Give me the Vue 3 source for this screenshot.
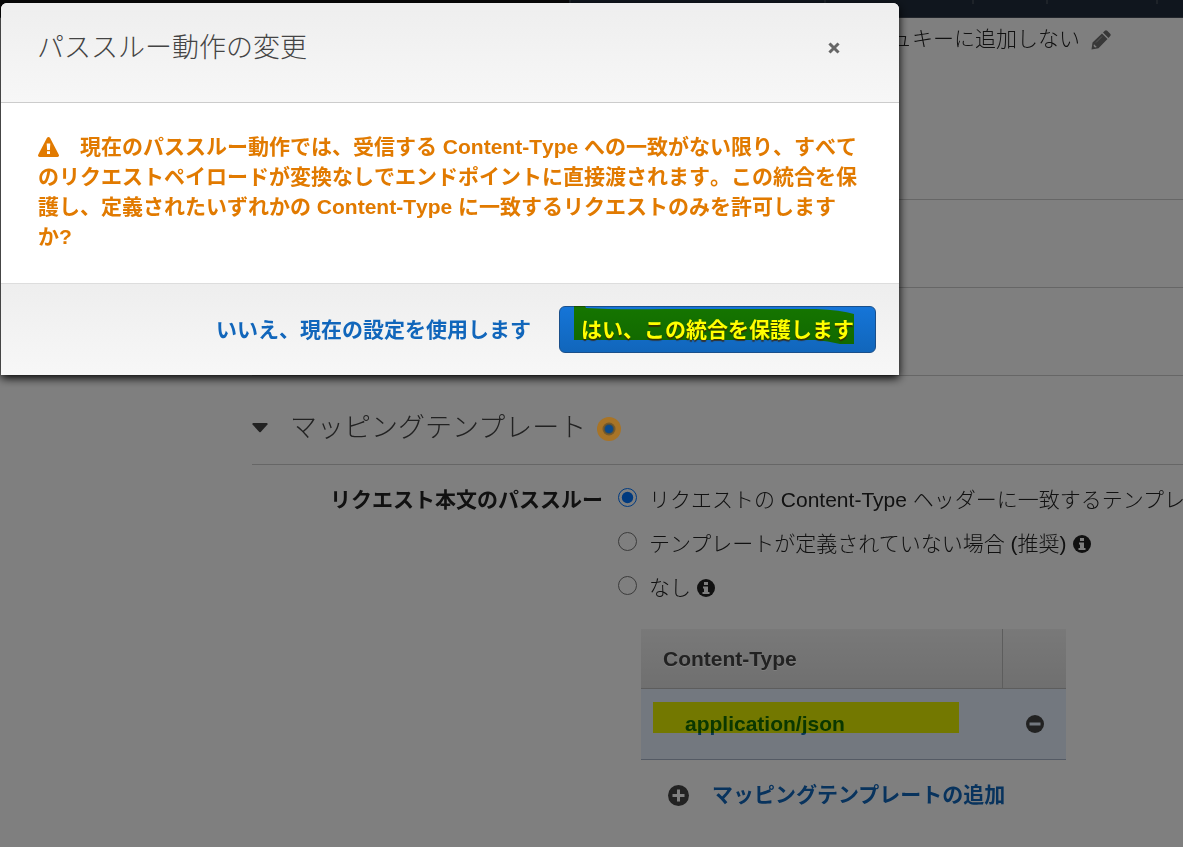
<template>
  <div class="page">
    <div class="topbar">
      <div class="topbar-brand"></div>
      <div class="topbar-item search"></div>
      <div class="topbar-item services"></div>
      <div class="topbar-item alerts"></div>
      <div class="topbar-item account"></div>
      <div class="topbar-item region"></div>
    </div>

    <main class="content">
      <section class="block cache">
        <span>ュキーに追加しない</span>
        <button type="button" class="icon-button" aria-label="編集">
          <svg width="20" height="20" viewBox="0 0 20 20">
            <path d="M0.500 19.500l1-7L11 3.500l5.500 5.500L7.500 18.200zM12 2.500l1.800-1.800q1.200-1 2.400 0l3 3q1 1.200 0 2.400L17.500 8z" fill="#707070" />
            <path d="M3 14.200l2.800 2.800-1.800.4-1.400-1.400z" fill="#fff" />
            <path d="M5 12.500l6-6" stroke="#b0b0b0" stroke-width="1" />
          </svg>
        </button>
      </section>
      <section class="block"></section>
      <section class="block"></section>

      <section class="block mapping">
        <button type="button" class="toggle" :aria-expanded="open" @click="open = !open">
          <svg width="16" height="10" viewBox="0 0 16 10">
            <path d="M1 0h14q1 0.500 0.500 1.500L8.700 9q-.7.600-1.400 0L.5 1.500Q0 .5 1 0z" fill="#444" />
          </svg>
          <h2>マッピングテンプレート</h2>
        </button>
        <svg class="beacon" width="24" height="24" viewBox="0 0 24 24">
          <circle cx="12" cy="12" r="12" fill="#a87427" />
          <circle cx="12" cy="12" r="6.500" fill="#765a2c" />
          <circle cx="12" cy="12" r="5" fill="#4f5040" />
          <circle cx="12" cy="12" r="4" fill="#0b4a8c" />
        </svg>
      </section>

      <div v-show="open" class="form">
        <div id="passthrough" class="form-label">リクエスト本文のパススルー</div>
        <div class="form-fields">
          <div role="radiogroup" aria-labelledby="passthrough">
            <div v-for="item in options" :key="item.value" class="option">
              <input :id="item.value" v-model="behavior" type="radio" name="behavior" :value="item.value" />
              <label :for="item.value">{{ item.text }}</label>
              <svg v-if="item.info" class="info" width="18" height="18" viewBox="0 0 18 18">
                <circle cx="9" cy="9" r="9" fill="#222" />
                <path d="M7 3h4v3H7zM6 7.500h5V13h1.500v2h-7v-2H7V9.500H6z" fill="#fff" />
              </svg>
            </div>
          </div>

          <table class="types">
            <thead>
              <tr>
                <th>Content-Type</th>
                <th class="action"></th>
              </tr>
            </thead>
            <tbody>
              <tr>
                <td class="type">
                  <a href="#">application/json</a>
                  <span class="marker"></span>
                </td>
                <td class="action">
                  <button type="button" class="icon-button" aria-label="削除">
                    <svg width="18" height="18" viewBox="0 0 18 18">
                      <circle cx="9" cy="9" r="9" fill="#444" />
                      <path d="M3.500 7.500h11v3h-11z" fill="#e6f0fe" />
                    </svg>
                  </button>
                </td>
              </tr>
            </tbody>
          </table>

          <button type="button" class="add">
            <svg width="21" height="21" viewBox="0 0 21 21">
              <circle cx="10.500" cy="10.500" r="10.500" fill="#444" />
              <path d="M9 4.500h3V9h4.500v3H12v4.500H9V12H4.500V9H9z" fill="#fff" />
            </svg>
            マッピングテンプレートの追加
          </button>
        </div>
      </div>
    </main>

    <div v-if="showDialog" class="backdrop">
      <div class="dialog" role="dialog" aria-labelledby="dialog-title">
        <header class="dialog-header">
          <h1 id="dialog-title">パススルー動作の変更</h1>
          <button type="button" class="icon-button" aria-label="閉じる" @click="showDialog = false">
            <svg width="12" height="12" viewBox="0 0 12 12">
              <path d="M2.500 2.500l7 7M9.500 2.500l-7 7" stroke="#666" stroke-width="3" stroke-linecap="square" />
            </svg>
          </button>
        </header>
        <p class="dialog-body">
          <svg class="warning" width="21" height="20" viewBox="0 0 21 20">
            <path d="M10.500 0q1 0 1.600 1l8.600 16.500q1 2-1.200 2.500h-18Q-.7 19.500.3 17.500L8.900 1q.6-1 1.600-1z" fill="#e17a00" />
            <path d="M8.700 6.500h3.600l-.4 6.500H9.100zM9 14.300h3V17H9z" fill="#fff" />
          </svg>現在のパススルー動作では、受信する Content-Type への一致がない限り、すべてのリクエストペイロードが変換なしでエンドポイントに直接渡されます。この統合を保護し、定義されたいずれかの Content-Type に一致するリクエストのみを許可しますか?
        </p>
        <footer class="dialog-footer">
          <button type="button" class="cancel" @click="showDialog = false">いいえ、現在の設定を使用します</button>
          <button type="button" class="confirm" @click="showDialog = false">
            はい、この統合を保護します
            <svg class="stroke" viewBox="0 0 280 38" preserveAspectRatio="none">
              <path d="M0 0h11l1 2q30 2 80 1h150q25 1 38 5v30h-14q-12-3-25-4H0z" fill="#ff0" />
            </svg>
          </button>
        </footer>
      </div>
    </div>
  </div>
</template>

<script setup>
import { ref } from 'vue';

const open = ref(true);
const showDialog = ref(true);
const behavior = ref('when_no_match');

const options = [
  { value: 'when_no_match', text: 'リクエストの Content-Type ヘッダーに一致するテンプレ', info: false },
  { value: 'when_no_templates', text: 'テンプレートが定義されていない場合 (推奨)', info: true },
  { value: 'never', text: 'なし', info: true },
];
</script>

<style>
body {
  margin: 0;
  background: #fff;
}
</style>

<style scoped>
.page {
  min-height: 100vh;
  overflow: hidden;
  font-family: "Liberation Sans", "Noto Sans CJK JP", sans-serif;
  font-size: 21px;
  font-weight: 300;
  line-height: 30px;
  color: #222;
}

button {
  padding: 0;
  border: none;
  background: none;
  font: inherit;
  color: inherit;
  cursor: pointer;
}

svg {
  display: block;
  flex-shrink: 0;
}

.topbar {
  display: flex;
  height: 17px;
  border-bottom: 1px solid #444c58;
  background: #212d3c;
}

.topbar-brand {
  flex: 1;
  background: #111;
}

.topbar-item {
  box-sizing: border-box;
  height: 4px;
  border-left: 2px solid #3c4653;
}

.search {
  width: 255px;
}

.services {
  width: 148px;
}

.alerts {
  width: 74px;
}

.account {
  width: 110px;
}

.region {
  width: 27px;
}

.content {
  margin-left: 252px;
}

.block {
  height: 87px;
  border-bottom: 1px solid #ccc;
}

.cache {
  display: flex;
  align-items: flex-start;
  gap: 11px;
  box-sizing: border-box;
  height: 182px;
  padding: 6px 0 0 639px;
  white-space: nowrap;
}

.cache .icon-button {
  padding-top: 6px;
}

.mapping {
  display: flex;
  align-items: center;
  gap: 11px;
  height: 88px;
}

.toggle {
  display: flex;
  align-items: center;
  gap: 22px;
  padding-bottom: 8px;
  margin-top: 24px;
}

.mapping h2 {
  margin: 0;
  font-size: 27px;
  font-weight: 300;
  line-height: 40px;
  color: #444;
}

.beacon {
  position: relative;
  z-index: 2;
  margin-top: 18px;
}

.form {
  display: flex;
  gap: 15px;
  padding-top: 12px;
}

.form-label {
  width: 351px;
  padding-top: 8px;
  flex-shrink: 0;
  font-weight: 700;
  text-align: right;
  white-space: nowrap;
}

.option {
  display: flex;
  align-items: center;
  height: 44px;
  white-space: nowrap;
}

.option input {
  flex-shrink: 0;
  width: 19px;
  height: 19px;
  margin: 0 12px 3px 0;
}

.option label {
  padding-top: 2px;
}

.info {
  margin: 2px 0 0 6px;
}

.types {
  width: 425px;
  margin: 20px 0 0 23px;
  border-collapse: separate;
  border-spacing: 0;
  table-layout: fixed;
}

.types th {
  height: 59px;
  padding: 0 22px;
  border-bottom: 1px solid #bbb;
  background: linear-gradient(#f2f2f2, #dfdfdf);
  color: #444;
  text-align: left;
  text-shadow: 0 1px 0 #fff;
}

.types th.action {
  width: 64px;
  box-sizing: border-box;
  border-left: 1px solid #bbb;
}

.types td {
  height: 70px;
  padding: 0;
  border-bottom: 1px solid #a9b5c8;
  background: #e6f0fe;
}

.types .type {
  position: relative;
}

.type a {
  padding-left: 44px;
  font-weight: 700;
  color: #146eb4;
  text-decoration: none;
}

.marker {
  position: absolute;
  top: 13px;
  left: 12px;
  width: 306px;
  height: 31px;
  background: #ff0;
  mix-blend-mode: multiply;
}

td.action .icon-button {
  display: block;
  margin-left: 24px;
}

.add {
  display: flex;
  align-items: center;
  gap: 23px;
  margin: 20px 0 0 50px;
  font-weight: 700;
  color: #1166bb;
}

.backdrop {
  position: fixed;
  inset: 0;
  z-index: 1;
  padding: 3px 0 0 1px;
  background: rgba(0, 0, 0, 0.5);
}

.dialog {
  width: 76%;
  max-width: 898px;
  border-radius: 6px 6px 0 0;
  background: #fff;
  box-shadow: 0 3px 10px #000;
  overflow: hidden;
}

.dialog-header {
  display: flex;
  justify-content: space-between;
  padding: 25px 59px 34px 36px;
  border-bottom: 1px solid #ccc;
  background: linear-gradient(#eee, #f7f7f7);
}

.dialog-header h1 {
  margin: 0;
  font-size: 27px;
  font-weight: 300;
  line-height: 40px;
  color: #444;
}

.dialog-body {
  margin: 0;
  padding: 29px 37px 31px;
  font-weight: 700;
  font-kerning: none;
  color: #e17a00;
}

.warning {
  display: inline-block;
  margin-right: 21px;
  vertical-align: -3px;
}

.dialog-footer {
  display: flex;
  align-items: center;
  justify-content: flex-end;
  gap: 28px;
  padding: 22px 23px;
  border-top: 1px solid #ddd;
  background: linear-gradient(#eee, #f7f7f7);
  font-weight: 700;
}

.cancel {
  color: #1166bb;
}

.confirm {
  position: relative;
  height: 47px;
  padding: 0 21px;
  border: 1px solid #1a4f8a;
  border-radius: 6px;
  background: linear-gradient(#1575d8, #1166bb);
  color: #fff;
  text-shadow: 0 2px 1px #333;
}

.stroke {
  position: absolute;
  top: -1px;
  left: 14px;
  width: 280px;
  height: 38px;
  mix-blend-mode: multiply;
}
</style>
